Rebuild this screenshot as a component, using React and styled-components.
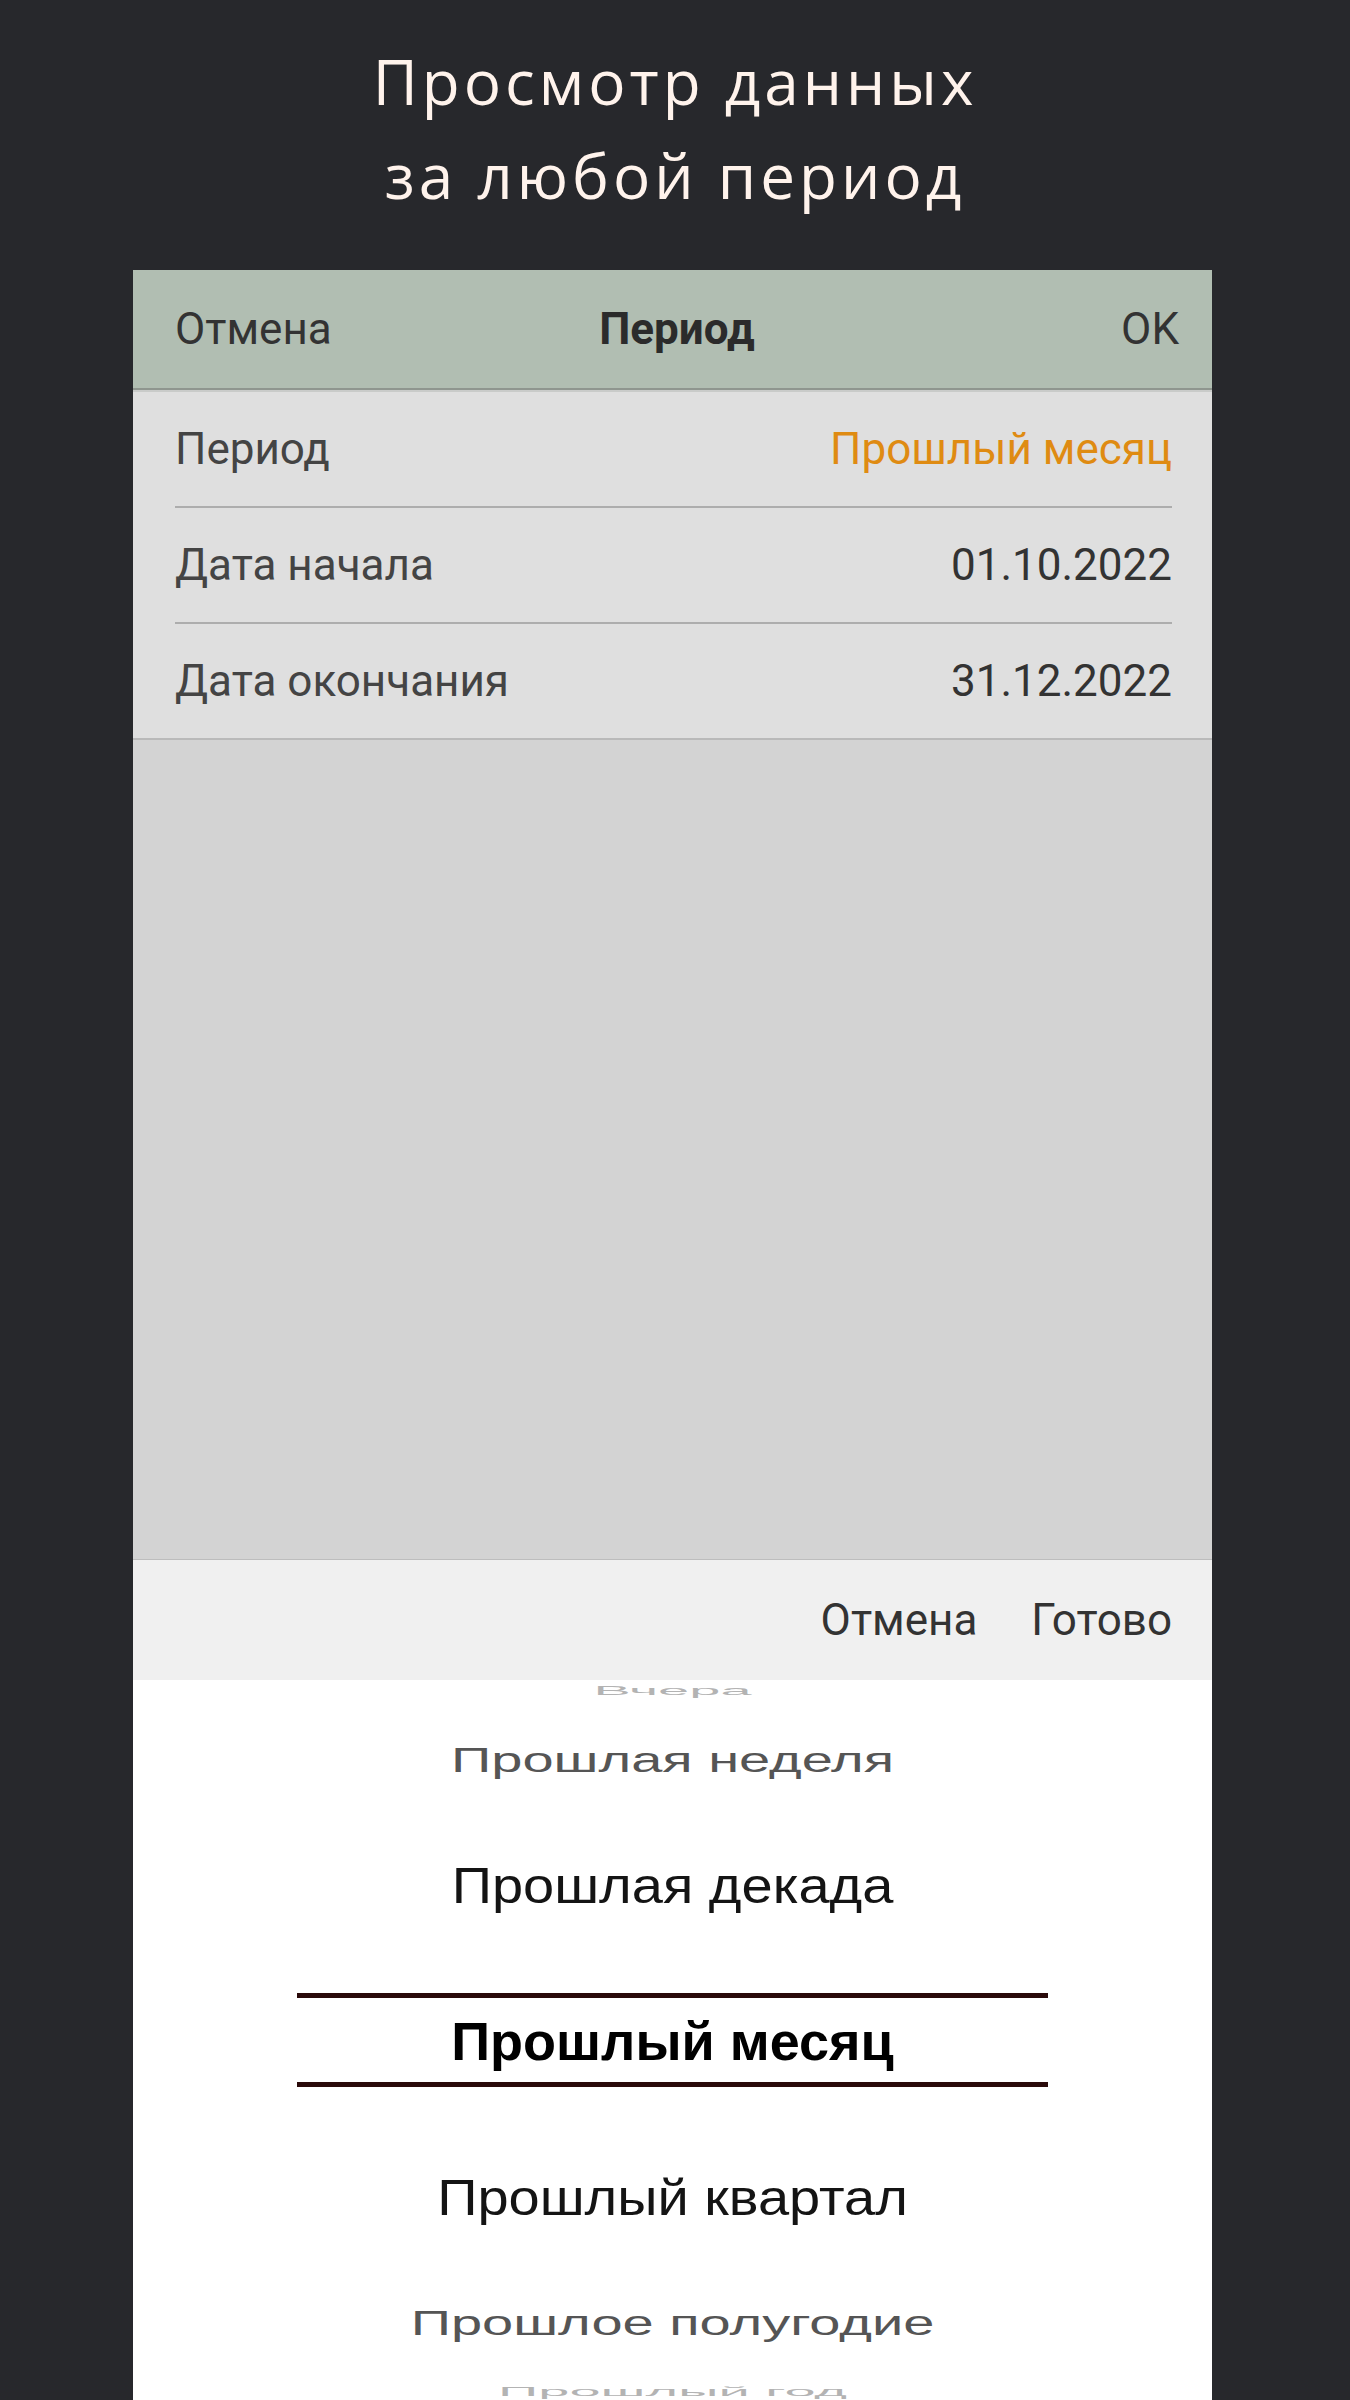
import styled, { createGlobalStyle } from "styled-components";

const GlobalStyle = createGlobalStyle`
  html, body {
    margin: 0;
    padding: 0;
    background: #27282c;
  }
  * {
    box-sizing: border-box;
  }
`;

const Page = styled.div`
  min-height: 2400px;
  display: flex;
  flex-direction: column;
  align-items: center;
  background: #27282c;
`;

const Title = styled.h1`
  margin: 0;
  padding-top: 34px;
  font-family: "Open Sans", "Noto Sans", sans-serif;
  font-weight: 400;
  font-size: 62px;
  letter-spacing: 4px;
  line-height: 94px;
  color: #fff3ec;
  text-align: center;
`;

const Panel = styled.div`
  margin-top: 48px;
  margin-left: -5px;
  width: 1079px;
  display: flex;
  flex-direction: column;
  font-family: Roboto, "Noto Sans", sans-serif;
`;

const Header = styled.div`
  height: 120px;
  background: #b1beb2;
  border-bottom: 2px solid #8f968f;
  display: grid;
  grid-template-columns: 1fr auto 1fr;
  align-items: center;
  padding: 0 33px 0 42px;
  font-size: 44px;
  color: #333;
`;

const HeaderButton = styled.span`
  justify-self: ${(p) => (p.$right ? "end" : "start")};
`;

const HeaderTitle = styled.span`
  font-weight: 700;
  color: #2b2b2b;
`;

const Rows = styled.div`
  background: #dfdfdf;
  border-top: 2px solid #c9cbc9;
  border-bottom: 2px solid #b9b9b9;
  padding: 0 40px 0 42px;
`;

const Row = styled.div`
  height: ${(p) => (p.$last ? "114px" : "116px")};
  display: flex;
  align-items: center;
  justify-content: space-between;
  border-bottom: ${(p) => (p.$last ? "none" : "2px solid #adadad")};
  font-size: 44px;
`;

const Label = styled.span`
  color: #444;
`;

const Value = styled.span`
  color: ${(p) => (p.$accent ? "#df8b12" : "#333")};
`;

const Backdrop = styled.div`
  height: 819px;
  background: #d3d3d3;
`;

const Toolbar = styled.div`
  height: 121px;
  background: #f0f0f0;
  border-top: 1px solid #bdbdbd;
  display: flex;
  align-items: center;
  justify-content: flex-end;
  gap: 54px;
  padding-right: 40px;
  font-size: 44px;
  color: #333;
`;

const Picker = styled.div`
  position: relative;
  height: 720px;
  background: #fff;
  overflow: hidden;
`;

const WheelList = styled.div`
  margin-top: -185px;
  display: flex;
  flex-direction: column;
`;

const ITEM_H = 156;
const RADIUS = 359;
const STEP = (25.8 * Math.PI) / 180;

const depthColors = ["#000", "#141414", "#555", "#b3b3b3"];

const WheelItem = styled.div`
  height: ${ITEM_H}px;
  display: flex;
  align-items: center;
  justify-content: center;
  font-family: "Liberation Sans", Arial, sans-serif;
  font-size: ${(p) => (p.$depth === 0 ? "54px" : "56px")};
  font-weight: ${(p) => (p.$depth === 0 ? 700 : 400)};
  color: ${(p) => depthColors[p.$depth]};
  white-space: nowrap;
`;

const Selection = styled.div`
  position: absolute;
  left: 164px;
  right: 164px;
  top: 313px;
  height: 94px;
  border-top: 5px solid #2a0a0a;
  border-bottom: 5px solid #2a0a0a;
  pointer-events: none;
`;

const rows = [
  { label: "Период", value: "Прошлый месяц", accent: true },
  { label: "Дата начала", value: "01.10.2022" },
  { label: "Дата окончания", value: "31.12.2022" },
];

const periods = [
  "Вчера",
  "Прошлая неделя",
  "Прошлая декада",
  "Прошлый месяц",
  "Прошлый квартал",
  "Прошлое полугодие",
  "Прошлый год",
];

const selected = 3;

function Wheel() {
  return (
    <Picker>
      <WheelList>
        {periods.map((name, i) => {
          const k = i - selected;
          const shift = RADIUS * Math.sin(k * STEP) - k * ITEM_H;
          const squash = Math.cos(k * STEP);
          return (
            <WheelItem
              key={name}
              $depth={Math.abs(k)}
              style={{ transform: `translateY(${shift}px) scaleY(${squash})` }}
            >
              {name}
            </WheelItem>
          );
        })}
      </WheelList>
      <Selection />
    </Picker>
  );
}

export default function App() {
  return (
    <>
      <GlobalStyle />
      <Page>
        <Title>
          Просмотр данных
          <br />
          за любой период
        </Title>
        <Panel>
          <Header>
            <HeaderButton>Отмена</HeaderButton>
            <HeaderTitle>Период</HeaderTitle>
            <HeaderButton $right>OK</HeaderButton>
          </Header>
          <Rows>
            {rows.map((r, i) => (
              <Row key={r.label} $last={i === rows.length - 1}>
                <Label>{r.label}</Label>
                <Value $accent={r.accent}>{r.value}</Value>
              </Row>
            ))}
          </Rows>
          <Backdrop />
          <Toolbar>
            <span>Отмена</span>
            <span>Готово</span>
          </Toolbar>
          <Wheel />
        </Panel>
      </Page>
    </>
  );
}
